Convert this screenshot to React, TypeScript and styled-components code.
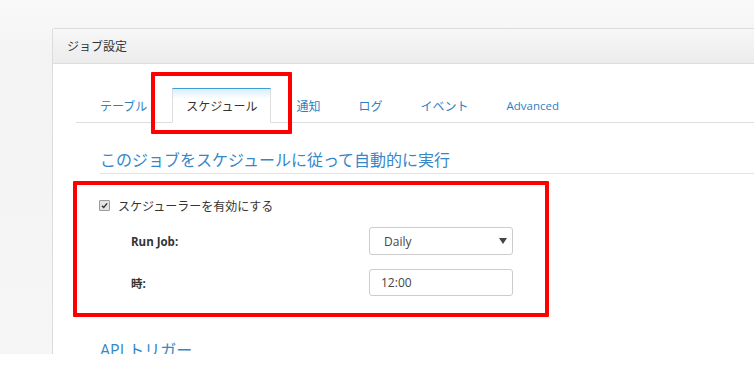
import React from "react";
import styled, { createGlobalStyle } from "styled-components";

const GlobalStyle = createGlobalStyle`
  html, body {
    margin: 0;
    padding: 0;
    background: #ffffff;
  }
  body {
    font-family: "Noto Sans CJK JP", "Open Sans", sans-serif;
    color: #333333;
  }
`;

const Viewport = styled.div`
  position: relative;
  height: 354px;
  overflow: hidden;
  background: linear-gradient(#f9f9f9, #f3f3f3 60px, #f6f6f6);
  padding: 28px 0 0 52px;
  box-sizing: border-box;
`;

const Panel = styled.div`
  width: 740px;
  height: 400px;
  background: #ffffff;
  border: 1px solid #dcdcdc;
  border-radius: 2px 0 0 0;
`;

const PanelHeader = styled.div`
  height: 34px;
  line-height: 34px;
  padding-left: 14px;
  font-size: 12px;
  color: #333333;
  background: linear-gradient(#f7f7f7, #ececec);
  border-bottom: 1px solid #dcdcdc;
`;

const PanelBody = styled.div`
  padding: 23px 0 0 23px;
`;

const TabBar = styled.div`
  display: flex;
  align-items: flex-end;
  gap: 12px;
  padding-left: 11px;
  height: 35px;
  border-bottom: 1px solid #dddddd;
`;

const Tab = styled.div<{ $active?: boolean; $latin?: boolean }>`
  height: ${(p) => (p.$active ? "35px" : "34px")};
  box-sizing: border-box;
  padding: 0 13px;
  display: flex;
  align-items: center;
  font-size: ${(p) => (p.$latin ? "11.5px" : "12px")};
  font-family: ${(p) =>
    p.$latin ? '"Open Sans", sans-serif' : '"Noto Sans CJK JP", sans-serif'};
  color: ${(p) => (p.$active ? "#333333" : "#2f7fbf")};
  margin-bottom: ${(p) => (p.$active ? "-1px" : "0")};
  ${(p) =>
    p.$active &&
    `
    background: linear-gradient(#d9eefa, #ffffff 10px);
    border: 1px solid #dddddd;
    border-top: 1px solid #3d9ddb;
    border-bottom: 1px solid #ffffff;
  `}
`;

const SectionTitle = styled.h2`
  margin: 24px 0 0 24px;
  font-weight: normal;
  font-size: 16px;
  line-height: 24px;
  color: #3587c8;
  padding-bottom: 2px;
  border-bottom: 1px solid #e3e3e3;
`;

const Form = styled.div`
  padding: 24px 0 0 23px;
  display: flex;
  flex-direction: column;
`;

const CheckRow = styled.label`
  display: flex;
  align-items: center;
  gap: 8px;
  font-size: 12px;
  height: 14px;
`;

const CheckBox = styled.span`
  width: 9px;
  height: 9px;
  border: 1px solid #9a9a9a;
  border-radius: 1px;
  background: #e4e4e4;
  display: flex;
  align-items: center;
  justify-content: center;
`;

const FieldRow = styled.div<{ $top: number }>`
  display: flex;
  align-items: center;
  margin-top: ${(p) => p.$top}px;
  padding-left: 32px;
`;

const FieldLabel = styled.span`
  width: 238px;
  font-family: "Open Sans", "Noto Sans CJK JP", sans-serif;
  font-weight: bold;
  font-size: 11.5px;
  color: #333333;
`;

const Control = styled.div<{ $h: number }>`
  width: 144px;
  height: ${(p) => p.$h}px;
  box-sizing: border-box;
  border: 1px solid #cccccc;
  border-radius: 3px;
  display: flex;
  align-items: center;
  justify-content: space-between;
  font-family: "Open Sans", sans-serif;
  font-size: 12px;
  color: #444444;
`;

const ControlText = styled.span<{ $pad: number }>`
  padding-left: ${(p) => p.$pad}px;
`;

const Caret = styled.svg`
  margin-right: 5px;
`;

const NextTitle = styled.h2`
  margin: 42px 0 0 24px;
  font-weight: normal;
  font-size: 16px;
  line-height: 24px;
  color: #3587c8;
  font-family: "Open Sans", "Noto Sans CJK JP", sans-serif;
`;

const Highlight = styled.div<{ $x: number; $y: number; $w: number; $h: number }>`
  position: absolute;
  left: ${(p) => p.$x}px;
  top: ${(p) => p.$y}px;
  width: ${(p) => p.$w}px;
  height: ${(p) => p.$h}px;
  box-sizing: border-box;
  border: 4px solid #ff0000;
  border-radius: 1px;
  pointer-events: none;
`;

const tabs = ["テーブル", "スケジュール", "通知", "ログ", "イベント", "Advanced"];

function App() {
  return (
    <>
      <GlobalStyle />
      <Viewport>
        <Panel>
          <PanelHeader>ジョブ設定</PanelHeader>
          <PanelBody>
            <TabBar>
              {tabs.map((t) => (
                <Tab key={t} $active={t === "スケジュール"} $latin={t === "Advanced"}>
                  {t}
                </Tab>
              ))}
            </TabBar>
            <SectionTitle>このジョブをスケジュールに従って自動的に実行</SectionTitle>
            <Form>
              <CheckRow>
                <CheckBox>
                  <svg width="7" height="7" viewBox="0 0 8 8">
                    <path d="M1 4.2 L3.1 6.3 L7 1.6" fill="none" stroke="#333" strokeWidth="1.6" />
                  </svg>
                </CheckBox>
                スケジューラーを有効にする
              </CheckRow>
              <FieldRow $top={15}>
                <FieldLabel>Run Job:</FieldLabel>
                <Control $h={28}>
                  <ControlText $pad={14}>Daily</ControlText>
                  <Caret width="8" height="6" viewBox="0 0 8 6">
                    <path d="M0 0 H8 L4 6 Z" fill="#444" />
                  </Caret>
                </Control>
              </FieldRow>
              <FieldRow $top={14}>
                <FieldLabel>時:</FieldLabel>
                <Control $h={27}>
                  <ControlText $pad={11}>12:00</ControlText>
                </Control>
              </FieldRow>
            </Form>
            <NextTitle>API トリガー</NextTitle>
          </PanelBody>
        </Panel>
        <Highlight $x={151} $y={72} $w={141} $h={62} />
        <Highlight $x={73} $y={181} $w={476} $h={136} />
      </Viewport>
    </>
  );
}

export default App;
